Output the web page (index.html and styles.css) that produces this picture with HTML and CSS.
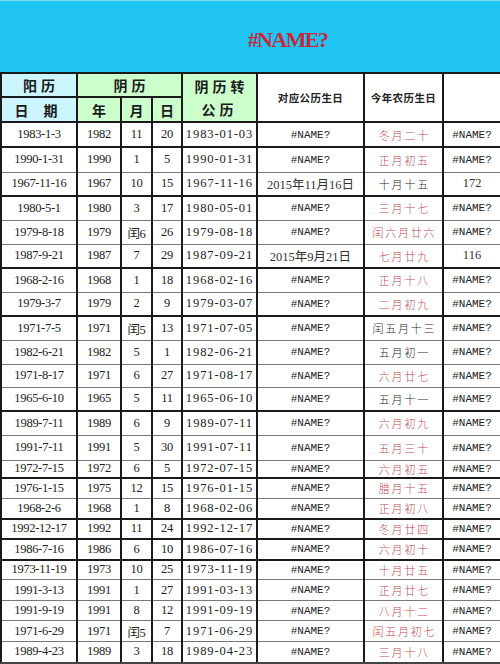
FILE: index.html
```html
<!DOCTYPE html>
<html lang="zh">
<head>
<meta charset="utf-8">
<title>农历生日表</title>
<link rel="stylesheet" href="styles.css">
</head>
<body>
<div class="sheet">
  <div class="title"><span class="title-text">#NAME?</span></div>
  <table class="grid">
    <colgroup>
      <col class="w1"><col class="w2"><col class="w3"><col class="w4"><col class="w5"><col class="w6"><col class="w7"><col class="w8">
    </colgroup>
    <thead>
      <tr class="h1">
        <th class="hd cyan">阳历</th>
        <th class="hd green" colspan="3">阴历</th>
        <th class="hd green tall" rowspan="2">阴历转<br>公历</th>
        <th class="hs" rowspan="2">对应公历生日</th>
        <th class="hs" rowspan="2">今年农历生日</th>
        <th class="hs" rowspan="2"></th>
      </tr>
      <tr class="h2">
        <th class="hd cyan wide">日 期</th>
        <th class="hd green">年</th>
        <th class="hd green">月</th>
        <th class="hd green">日</th>
      </tr>
    </thead>
    <tbody>
      <tr class="r25 thick"><td class="d">1983-1-3</td><td class="d">1982</td><td class="d">11</td><td class="d">20</td><td class="g">1983-01-03</td><td class="n">#NAME?</td><td class="l red">冬月二十</td><td class="n">#NAME?</td></tr>
      <tr class="r25"><td class="d">1990-1-31</td><td class="d">1990</td><td class="d">1</td><td class="d">5</td><td class="g">1990-01-31</td><td class="n">#NAME?</td><td class="l red">正月初五</td><td class="n">#NAME?</td></tr>
      <tr class="r24 thick"><td class="d">1967-11-16</td><td class="d">1967</td><td class="d">10</td><td class="d">15</td><td class="g">1967-11-16</td><td class="s">2015年11月16日</td><td class="l">十月十五</td><td class="s">172</td></tr>
      <tr class="r24"><td class="d">1980-5-1</td><td class="d">1980</td><td class="d">3</td><td class="d">17</td><td class="g">1980-05-01</td><td class="n">#NAME?</td><td class="l red">三月十七</td><td class="n">#NAME?</td></tr>
      <tr class="r24"><td class="d">1979-8-18</td><td class="d">1979</td><td class="d">闰6</td><td class="d">26</td><td class="g">1979-08-18</td><td class="n">#NAME?</td><td class="l red">闰六月廿六</td><td class="n">#NAME?</td></tr>
      <tr class="r24 thick"><td class="d">1987-9-21</td><td class="d">1987</td><td class="d">7</td><td class="d">29</td><td class="g">1987-09-21</td><td class="s">2015年9月21日</td><td class="l red">七月廿九</td><td class="s">116</td></tr>
      <tr class="r24"><td class="d">1968-2-16</td><td class="d">1968</td><td class="d">1</td><td class="d">18</td><td class="g">1968-02-16</td><td class="n">#NAME?</td><td class="l red">正月十八</td><td class="n">#NAME?</td></tr>
      <tr class="r24 thick"><td class="d">1979-3-7</td><td class="d">1979</td><td class="d">2</td><td class="d">9</td><td class="g">1979-03-07</td><td class="n">#NAME?</td><td class="l red">二月初九</td><td class="n">#NAME?</td></tr>
      <tr class="r24"><td class="d">1971-7-5</td><td class="d">1971</td><td class="d">闰5</td><td class="d">13</td><td class="g">1971-07-05</td><td class="n">#NAME?</td><td class="l">闰五月十三</td><td class="n">#NAME?</td></tr>
      <tr class="r24"><td class="d">1982-6-21</td><td class="d">1982</td><td class="d">5</td><td class="d">1</td><td class="g">1982-06-21</td><td class="n">#NAME?</td><td class="l">五月初一</td><td class="n">#NAME?</td></tr>
      <tr class="r23"><td class="d">1971-8-17</td><td class="d">1971</td><td class="d">6</td><td class="d">27</td><td class="g">1971-08-17</td><td class="n">#NAME?</td><td class="l red">六月廿七</td><td class="n">#NAME?</td></tr>
      <tr class="r24 thick"><td class="d">1965-6-10</td><td class="d">1965</td><td class="d">5</td><td class="d">11</td><td class="g">1965-06-10</td><td class="n">#NAME?</td><td class="l">五月十一</td><td class="n">#NAME?</td></tr>
      <tr class="r24"><td class="d">1989-7-11</td><td class="d">1989</td><td class="d">6</td><td class="d">9</td><td class="g">1989-07-11</td><td class="n">#NAME?</td><td class="l red">六月初九</td><td class="n">#NAME?</td></tr>
      <tr class="r25"><td class="d">1991-7-11</td><td class="d">1991</td><td class="d">5</td><td class="d">30</td><td class="g">1991-07-11</td><td class="n">#NAME?</td><td class="l red">五月三十</td><td class="n">#NAME?</td></tr>
      <tr class="r16 thick"><td class="d">1972-7-15</td><td class="d">1972</td><td class="d">6</td><td class="d">5</td><td class="g">1972-07-15</td><td class="n">#NAME?</td><td class="l red">六月初五</td><td class="n">#NAME?</td></tr>
      <tr class="r21"><td class="d">1976-1-15</td><td class="d">1975</td><td class="d">12</td><td class="d">15</td><td class="g">1976-01-15</td><td class="n">#NAME?</td><td class="l red">腊月十五</td><td class="n">#NAME?</td></tr>
      <tr class="r20 thick"><td class="d">1968-2-6</td><td class="d">1968</td><td class="d">1</td><td class="d">8</td><td class="g">1968-02-06</td><td class="n">#NAME?</td><td class="l red">正月初八</td><td class="n">#NAME?</td></tr>
      <tr class="r20 thick"><td class="d">1992-12-17</td><td class="d">1992</td><td class="d">11</td><td class="d">24</td><td class="g">1992-12-17</td><td class="n">#NAME?</td><td class="l red">冬月廿四</td><td class="n">#NAME?</td></tr>
      <tr class="r21 thick"><td class="d">1986-7-16</td><td class="d">1986</td><td class="d">6</td><td class="d">10</td><td class="g">1986-07-16</td><td class="n">#NAME?</td><td class="l red">六月初十</td><td class="n">#NAME?</td></tr>
      <tr class="r20"><td class="d">1973-11-19</td><td class="d">1973</td><td class="d">10</td><td class="d">25</td><td class="g">1973-11-19</td><td class="n">#NAME?</td><td class="l red">十月廿五</td><td class="n">#NAME?</td></tr>
      <tr class="r21"><td class="d">1991-3-13</td><td class="d">1991</td><td class="d">1</td><td class="d">27</td><td class="g">1991-03-13</td><td class="n">#NAME?</td><td class="l red">正月廿七</td><td class="n">#NAME?</td></tr>
      <tr class="r20"><td class="d">1991-9-19</td><td class="d">1991</td><td class="d">8</td><td class="d">12</td><td class="g">1991-09-19</td><td class="n">#NAME?</td><td class="l red">八月十二</td><td class="n">#NAME?</td></tr>
      <tr class="r21"><td class="d">1971-6-29</td><td class="d">1971</td><td class="d">闰5</td><td class="d">7</td><td class="g">1971-06-29</td><td class="n">#NAME?</td><td class="l red">闰五月初七</td><td class="n">#NAME?</td></tr>
      <tr class="r21 last"><td class="d">1989-4-23</td><td class="d">1989</td><td class="d">3</td><td class="d">18</td><td class="g">1989-04-23</td><td class="n">#NAME?</td><td class="l red">三月十八</td><td class="n">#NAME?</td></tr>
    </tbody>
  </table>
</div>
</body>
</html>
```

FILE: styles.css
```css
html, body {
  margin: 0;
  padding: 0;
  background: #ffffff;
}

.sheet {
  width: 500px;
  height: 664px;
  overflow: hidden;
  background: #ffffff;
}

.title {
  height: 72px;
  box-sizing: border-box;
  border-top: 1px solid #7fdcf5;
  background: #1fc4f0;
  display: flex;
  align-items: center;
  justify-content: center;
  padding-left: 75px;
  padding-top: 6px;
}

.title-text {
  font-family: "Liberation Serif", "Times New Roman", serif;
  font-size: 22px;
  font-weight: bold;
  letter-spacing: -1.6px;
  color: #c42a3c;
}

.grid {
  width: 500px;
  table-layout: fixed;
  border-collapse: collapse;
  border-left: 2px solid #777;
  border-right: 2px solid #222;
}

.w1 { width: 76px; }
.w2 { width: 44px; }
.w3 { width: 31px; }
.w4 { width: 30px; }
.w5 { width: 75px; }
.w6 { width: 107px; }
.w7 { width: 79px; }
.w8 { width: 58px; }

.grid th,
.grid td {
  padding: 0;
  text-align: center;
  vertical-align: middle;
  border-left: 2px solid #1a1a1a;
  border-right: 2px solid #1a1a1a;
  border-top: 1px solid #777;
  border-bottom: 1px solid #777;
  overflow: hidden;
  white-space: nowrap;
}

.grid thead th {
  border-top: 2px solid #1a1a1a;
  border-bottom: 2px solid #1a1a1a;
}

.h1 { height: 24px; }
.h2 { height: 25px; }

.grid thead .h1 .cyan,
.grid thead .h1 .green:first-of-type {
  border-bottom: 1px solid #555;
}

.cyan { background: #ccf5ff; }
.green { background: #ccffcc; }

.hd {
  font-family: "Noto Sans CJK SC", sans-serif;
  font-weight: 700;
  font-size: 14px;
  letter-spacing: 4px;
  text-indent: 4px;
  color: #1a1a1a;
  line-height: 20px;
}

.hd.wide { letter-spacing: 6px; text-indent: 0; }
.hd.tall { line-height: 23px; }

.hs {
  background: #ffffff;
  font-family: "Noto Sans CJK SC", sans-serif;
  font-weight: 700;
  font-size: 10.5px;
  letter-spacing: 0.4px;
  color: #222;
}

.r25 { height: 25px; }
.r24 { height: 24px; }
.r23 { height: 23px; }
.r21 { height: 21px; }
.r20 { height: 20px; }
.r16 { height: 16px; }

.grid tbody tr.thick td {
  border-bottom: 2px solid #1a1a1a;
}

.grid tbody tr.last td {
  border-bottom: 2px solid #444;
}

.d {
  font-family: "Liberation Serif", "Times New Roman", "Noto Sans CJK SC", serif;
  font-size: 12.5px;
  color: #222;
  letter-spacing: -0.3px;
}

.g {
  font-family: "Liberation Serif", "Times New Roman", serif;
  font-size: 12.5px;
  color: #222;
  letter-spacing: 0.9px;
}

.n {
  font-family: "Liberation Mono", "Courier New", monospace;
  font-size: 11px;
  color: #222;
}

.s {
  font-family: "Liberation Serif", "Noto Sans CJK SC", serif;
  font-size: 12.5px;
  color: #333;
}

.l {
  font-family: "Noto Sans CJK SC", sans-serif;
  font-weight: 300;
  font-size: 11px;
  letter-spacing: 1.8px;
  text-indent: 1.8px;
  color: #2a2a2a;
}

.l.red { color: #c34a4f; }
```
